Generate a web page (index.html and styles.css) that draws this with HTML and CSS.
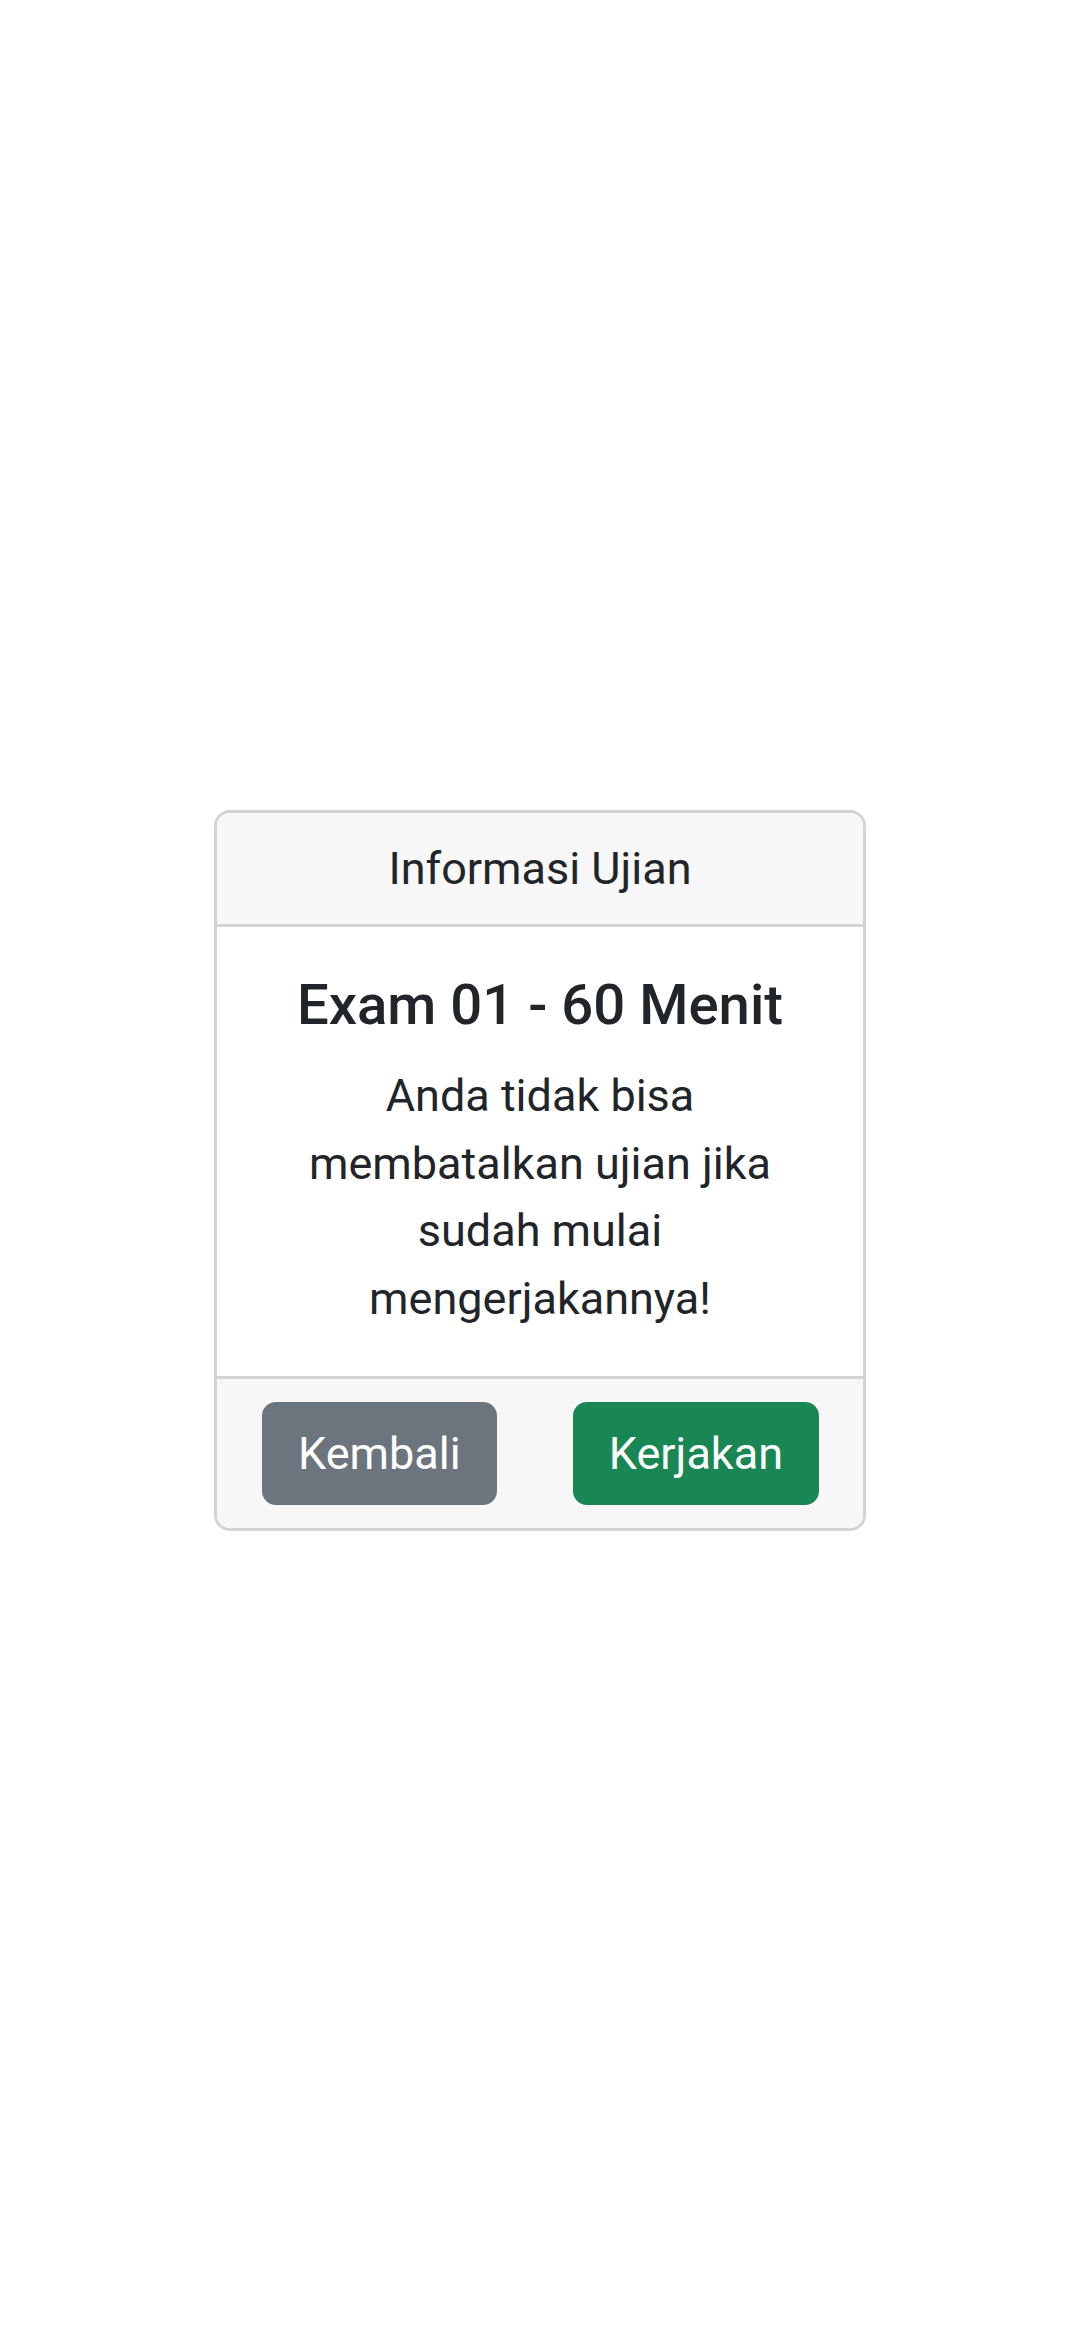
FILE: index.html
```html
<!DOCTYPE html>
<html lang="id">
<head>
<meta charset="utf-8">
<title>Informasi Ujian</title>
<link rel="stylesheet" href="styles.css">
</head>
<body>
<main class="page">
  <section class="card">
    <header class="card-header">Informasi Ujian</header>
    <div class="card-body">
      <h5 class="card-title">Exam 01 - 60 Menit</h5>
      <p class="card-text">Anda tidak bisa membatalkan ujian jika sudah mulai mengerjakannya!</p>
    </div>
    <footer class="card-footer">
      <button class="btn btn-secondary">Kembali</button>
      <button class="btn btn-success">Kerjakan</button>
    </footer>
  </section>
</main>
</body>
</html>
```

FILE: styles.css
```css
* { box-sizing: border-box; }
html, body {
  margin: 0;
  padding: 0;
  background: #ffffff;
}
body {
  font-family: Roboto, "Noto Sans", "Liberation Sans", sans-serif;
  color: #212529;
}
.page {
  width: 1080px;
  height: 2340px;
  display: flex;
  align-items: center;
  justify-content: center;
}
.card {
  width: 652px;
  border: 3px solid #d3d3d3;
  border-radius: 16px;
  overflow: hidden;
  background: #fff;
  text-align: center;
}
.card-header {
  background: #f7f7f7;
  border-bottom: 3px solid #d3d3d3;
  padding: 22px 45px;
  font-size: 45px;
  line-height: 67.5px;
}
.card-body {
  padding: 45px 45px 44px;
}
.card-title {
  margin: 0 0 22.5px;
  font-size: 56.25px;
  font-weight: 500;
  line-height: 67.5px;
}
.card-text {
  margin: 0;
  font-size: 45px;
  line-height: 67.5px;
}
.card-footer {
  background: #f7f7f7;
  border-top: 3px solid #d3d3d3;
  padding: 22.5px 44px 22.5px 45px;
  display: flex;
  justify-content: space-between;
}
.btn {
  font-family: inherit;
  font-size: 45px;
  line-height: 67.5px;
  padding: 18px 36px;
  border: 0;
  border-radius: 14px;
  color: #fff;
}
.btn-secondary { background: #6c757d; }
.btn-success { background: #198754; }
```
